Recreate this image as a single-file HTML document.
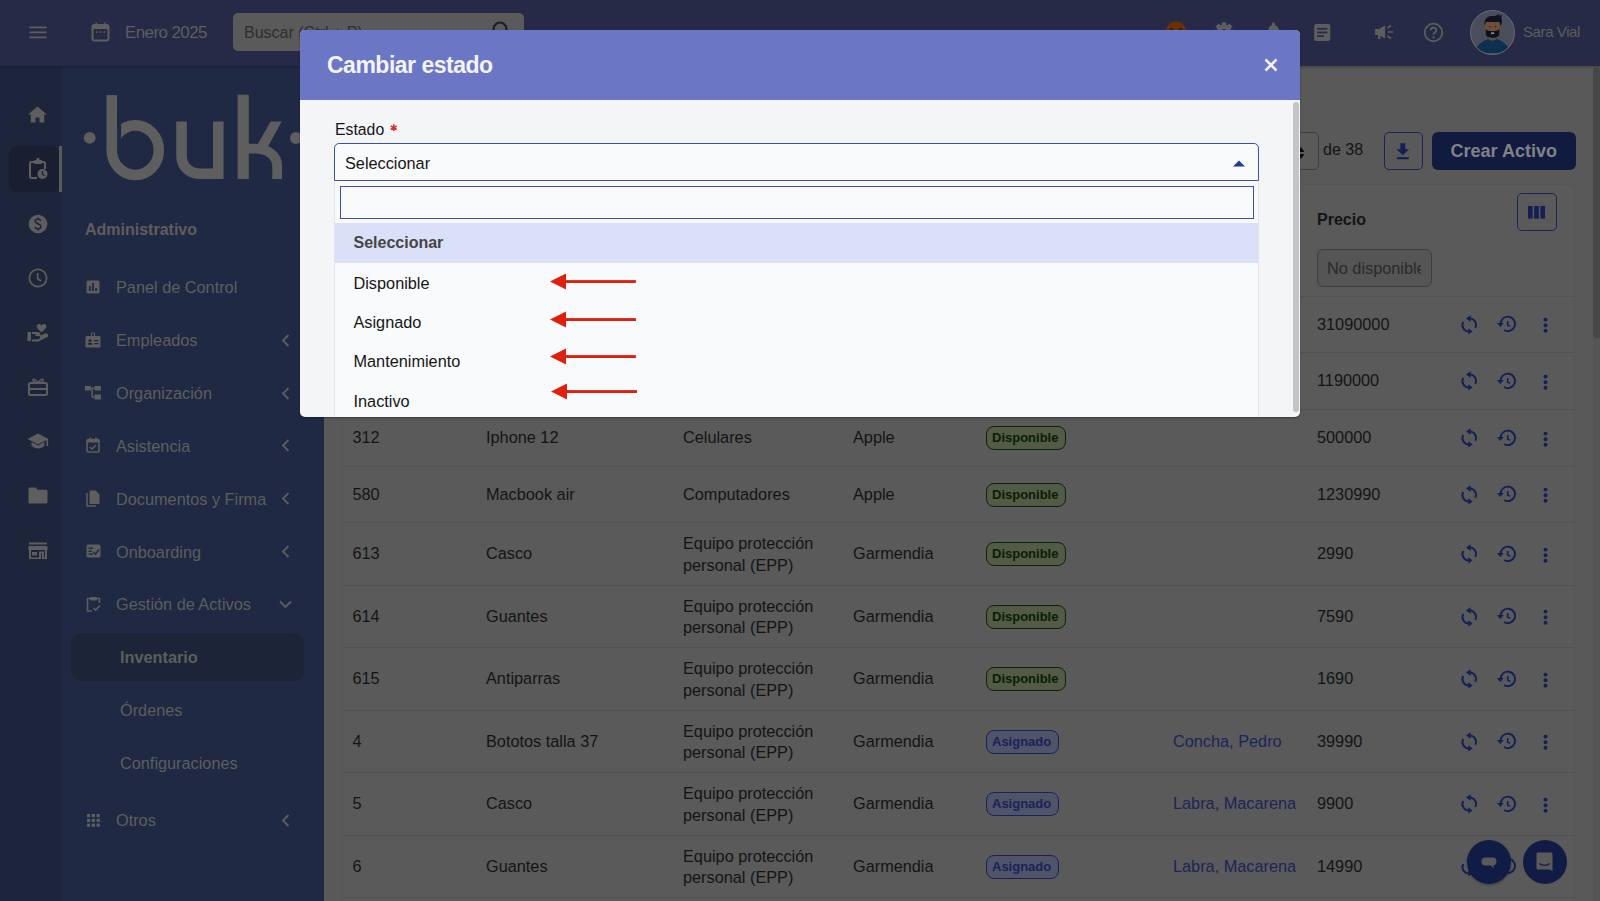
<!DOCTYPE html>
<html><head><meta charset="utf-8">
<style>
*{box-sizing:border-box;margin:0;padding:0}
html,body{width:1600px;height:901px;overflow:hidden;font-family:"Liberation Sans",sans-serif;background:#595959}
.abs{position:absolute}
#top{position:absolute;left:0;top:0;width:1600px;height:66px;background:#262a47;z-index:2;box-shadow:0 1px 3px rgba(0,0,0,.25)}
#rail{position:absolute;left:0;top:66px;width:62px;height:835px;background:#1c2539}
#side{position:absolute;left:62px;top:66px;width:262px;height:835px;background:#1f2943}
#main{position:absolute;left:324px;top:66px;width:1276px;height:835px;background:#595959}
.gi{fill:#5e5e5e}
.st{position:absolute;left:116px;font-size:16.3px;line-height:20px;color:#5e5e5e;white-space:nowrap}
.sico{position:absolute;left:86px}
.chev{position:absolute;left:281px}
.row{position:absolute;left:342px;width:1233px;border-bottom:1px solid #525252}
.c{position:absolute;top:50%;transform:translateY(-50%);font-size:16.3px;line-height:21.5px;color:#141414;white-space:nowrap}
.badge{position:absolute;top:50%;transform:translateY(-50%);left:644px;height:24px;border-radius:8px;font-size:13px;font-weight:bold;line-height:22px;padding:0 5px 0 5px}
.bd{background:#515b45;border:1px solid #0d2209;color:#0a1e06;width:80px}
.ba{background:#4f5468;border:1px solid #18235a;color:#18235a;width:73px}
.act{position:absolute;top:50%;transform:translateY(-50%)}
#modal{position:absolute;z-index:5;left:300px;top:30px;width:1000px;height:387px;border-radius:5px;overflow:hidden;background:#f4f5f7;box-shadow:0 1px 2px rgba(0,0,0,.35)}
#mh{position:absolute;left:0;top:0;width:1000px;height:70px;background:#6b77c5}
</style></head><body>

<!-- TOP BAR -->
<div id="top">
  <svg class="abs" style="left:29px;top:26px" width="18" height="13" viewBox="0 0 18 13"><rect x="0.5" y="0.5" width="17" height="1.8" fill="#5e5e5e"/><rect x="0.5" y="5.5" width="17" height="1.8" fill="#5e5e5e"/><rect x="0.5" y="10.5" width="17" height="1.8" fill="#5e5e5e"/></svg>
  <svg class="abs" style="left:91px;top:22px" width="19" height="20" viewBox="0 0 19 20"><rect x="1.5" y="3" width="16" height="15.5" rx="2" fill="none" stroke="#5e5e5e" stroke-width="2"/><rect x="1.5" y="3" width="16" height="4" fill="#5e5e5e"/><rect x="4.5" y="0.5" width="1.6" height="4" fill="#5e5e5e"/><rect x="12.9" y="0.5" width="1.6" height="4" fill="#5e5e5e"/><rect x="5" y="9.3" width="1.6" height="1.6" fill="#5e5e5e"/><rect x="8.7" y="9.3" width="1.6" height="1.6" fill="#5e5e5e"/><rect x="12.4" y="9.3" width="1.6" height="1.6" fill="#5e5e5e"/></svg>
  <div class="abs" style="left:125px;top:21.7px;font-size:17px;line-height:22px;color:#5e5e5e;letter-spacing:-0.6px">Enero 2025</div>
  <div class="abs" style="left:233px;top:13px;width:291px;height:38px;border-radius:5px;background:#5a5a5a"></div>
  <div class="abs" style="left:244px;top:23px;font-size:16px;line-height:20px;color:#2e2e2e">Buscar (Ctrl + P)</div>
  <svg class="abs" style="left:491px;top:20px" width="20" height="20" viewBox="0 0 20 20"><circle cx="9" cy="9" r="6.5" fill="none" stroke="#1e1e1e" stroke-width="2.2"/></svg>
  <svg class="abs" style="left:1164.5px;top:20.5px" width="22" height="22" viewBox="0 0 22 22"><circle cx="11" cy="11" r="10.5" fill="#6b3100"/><ellipse cx="6.5" cy="8.8" rx="1.9" ry="2.1" fill="#2a2230"/><ellipse cx="15.5" cy="8.8" rx="1.9" ry="2.1" fill="#2a2230"/><ellipse cx="6.5" cy="13.5" rx="1.9" ry="2.1" fill="#2a2230"/><ellipse cx="15.5" cy="13.5" rx="1.9" ry="2.1" fill="#2a2230"/></svg>
  <svg class="abs" style="left:1214px;top:22px" width="20" height="20" viewBox="0 0 20 20"><circle cx="10" cy="10" r="7.5" fill="#5e5e5e"/><g fill="#5e5e5e"><rect x="7.8" y="0.3" width="4.4" height="19.4"/><rect x="7.8" y="0.3" width="4.4" height="19.4" transform="rotate(45 10 10)"/><rect x="7.8" y="0.3" width="4.4" height="19.4" transform="rotate(90 10 10)"/><rect x="7.8" y="0.3" width="4.4" height="19.4" transform="rotate(135 10 10)"/></g><circle cx="10" cy="10" r="3" fill="#262a47"/></svg>
  <svg class="abs" style="left:1264px;top:22px" width="19" height="20" viewBox="0 0 19 20"><rect x="8" y="0.5" width="3" height="3" rx="1.2" fill="#5e5e5e"/><path d="M9.5 3 C5.5 3 4 6 4 10 L2 14.5 H17 L15 10 C15 6 13.5 3 9.5 3Z" fill="#5e5e5e"/></svg>
  <svg class="abs" style="left:1314px;top:24px" width="17" height="17.5" viewBox="0 0 17 18"><rect x="0" y="0" width="16.5" height="17.5" rx="2" fill="#5e5e5e"/><rect x="3" y="4" width="10.5" height="1.8" fill="#262a47"/><rect x="3" y="7.8" width="10.5" height="1.8" fill="#262a47"/><rect x="3" y="11.6" width="7" height="1.8" fill="#262a47"/></svg>
  <svg class="abs" style="left:1374px;top:24px" width="21" height="16" viewBox="0 0 21 16"><path d="M1 5 H5 L11 1.5 V14.5 L5 11 H1Z" fill="#5e5e5e"/><rect x="4" y="10" width="2.5" height="5" fill="#5e5e5e"/><path d="M14 8 H19 M13.5 4 L17 1.5 M13.5 12 L17 14.5" stroke="#5e5e5e" stroke-width="1.6" fill="none"/></svg>
  <svg class="abs" style="left:1423px;top:22px" width="21" height="21" viewBox="0 0 21 21"><circle cx="10.5" cy="10.5" r="8.8" fill="none" stroke="#5e5e5e" stroke-width="1.8"/><path d="M7.7 8.2 C7.7 4.8 13.3 4.8 13.3 8.2 C13.3 10.3 10.5 10.6 10.5 12.6" fill="none" stroke="#5e5e5e" stroke-width="1.8"/><circle cx="10.5" cy="15.3" r="1.1" fill="#5e5e5e"/></svg>
  <div id="avatar" class="abs" style="left:1469.5px;top:9.8px;width:45px;height:45px;border-radius:50%;background:#4a4e5c;border:1.5px solid #6b6b6b;overflow:hidden">
    <svg width="42" height="42" viewBox="1.5 1.5 42 42" style="display:block"><path d="M6.5 40 C8 35 13 31.5 19 29.5 L23 31.5 L27 29.5 C33 31.5 38 35 39.5 40 L39.5 46 H6.5Z" fill="#0d3050"/><rect x="19.8" y="25" width="6.2" height="5.5" fill="#6a4a30"/><ellipse cx="14.8" cy="19.2" rx="1.4" ry="2" fill="#6a4a30"/><ellipse cx="31" cy="19.2" rx="1.4" ry="2" fill="#6a4a30"/><path d="M16 12 H30.3 V22 C30.3 25 27 28 23 28 C19 28 16 25 16 22Z" fill="#6e4e34"/><path d="M16.3 19.5 C17 21 19 21.5 23 21.5 C27 21.5 29 21 29.8 19.5 V24.5 C29.8 27 26.5 28.4 23 28.4 C19.5 28.4 16.3 27 16.3 24.5Z" fill="#0e1220"/><rect x="21.6" y="23" width="3" height="1.3" fill="#b8b8b8"/><path d="M15 16 C14.3 9 18 6.5 23 6.5 C26 6.5 28 6 29.5 4.2 L29.8 6.8 L32.3 4.8 L31.8 8.5 C33 11 32.6 14 31 16.5 L30 12.5 H16.5Z" fill="#0e1220"/><circle cx="20.4" cy="17" r="0.7" fill="#222"/><circle cx="26" cy="17" r="0.7" fill="#222"/></svg>
  </div>
  <div class="abs" style="left:1523px;top:22px;font-size:15px;line-height:20px;color:#5e5e5e;letter-spacing:-0.4px">Sara Vial</div>
</div>

<!-- RAIL -->
<div id="rail">
  <div class="abs" style="left:9px;top:80px;width:50px;height:46px;border-radius:8px;background:#191f31"></div>
  <div class="abs" style="left:59px;top:80px;width:3px;height:46px;background:#5a5a5a"></div>
  <svg class="abs" style="left:28px;top:40px" width="19" height="17" viewBox="0 0 19 17"><path d="M9.5 0.5 L19 8.5 H16.2 V16.5 H11.5 V11.5 H7.5 V16.5 H2.8 V8.5 H0Z" fill="#5e5e5e"/></svg>
  <svg class="abs" style="left:29px;top:92px" width="19" height="21" viewBox="0 0 19 21"><path d="M8 4 H2.5 C1.6 4 1 4.6 1 5.5 V18.5 C1 19.4 1.6 20 2.5 20 H8" fill="none" stroke="#5e5e5e" stroke-width="2"/><path d="M16 11 V5.5 C16 4.6 15.4 4 14.5 4 H12" fill="none" stroke="#5e5e5e" stroke-width="2"/><rect x="5" y="2" width="8" height="4" rx="1" fill="#5e5e5e"/><rect x="7.5" y="0" width="3" height="3" rx="1" fill="#5e5e5e"/><circle cx="13.5" cy="16" r="5" fill="#5e5e5e"/><path d="M13.5 13 V16.3 L15.6 17.6" stroke="#1c2539" stroke-width="1.4" fill="none"/></svg>
  <svg class="abs" style="left:28px;top:148px" width="20" height="20" viewBox="0 0 20 20"><circle cx="10" cy="10" r="9.3" fill="#5e5e5e"/><path d="M12.8 6.8 C12.3 5.7 11.3 5.2 10 5.2 C8.3 5.2 7.2 6 7.2 7.3 C7.2 10.2 12.9 9.3 12.9 12.5 C12.9 13.9 11.7 14.8 10 14.8 C8.5 14.8 7.4 14.2 7 13 M10 3.5 V5.2 M10 14.8 V16.5" fill="none" stroke="#1c2539" stroke-width="1.6"/></svg>
  <svg class="abs" style="left:28px;top:202px" width="20" height="20" viewBox="0 0 20 20"><circle cx="10" cy="10" r="8.6" fill="none" stroke="#5e5e5e" stroke-width="1.7"/><path d="M9.6 5 V10.5 L13 13" fill="none" stroke="#5e5e5e" stroke-width="1.7"/></svg>
  <svg class="abs" style="left:27px;top:257px" width="21" height="19" viewBox="0 0 21 19"><rect x="0.5" y="9" width="3.5" height="9" fill="#5e5e5e"/><path d="M5 10 H10 C11.5 10 12.5 11 12.5 12 H8.5 M5 17.5 H11 L20 13 C20.5 12 19.6 11 18.5 11.5 L13 14" fill="none" stroke="#5e5e5e" stroke-width="2.2"/><path d="M14.5 9.5 L10.5 5.5 C9 4 9.5 1 12 1 C13.2 1 14 1.7 14.5 2.5 C15 1.7 15.8 1 17 1 C19.5 1 20 4 18.5 5.5Z" fill="#5e5e5e"/></svg>
  <svg class="abs" style="left:28px;top:311px" width="20" height="19" viewBox="0 0 20 19"><rect x="1" y="6" width="18" height="12" rx="1.5" fill="none" stroke="#5e5e5e" stroke-width="2"/><rect x="1" y="11" width="18" height="2" fill="#5e5e5e"/><path d="M10 6 C8 3 5.5 1 5 3 C4.6 4.5 7 6 10 6 C13 6 15.4 4.5 15 3 C14.5 1 12 3 10 6Z" fill="none" stroke="#5e5e5e" stroke-width="1.6"/></svg>
  <svg class="abs" style="left:27px;top:367px" width="22" height="17" viewBox="0 0 22 17"><path d="M11 0.5 L21.5 6 L11 11.5 L0.5 6Z" fill="#5e5e5e"/><path d="M4.5 9 V12.5 C6 14.5 8.5 15.5 11 15.5 C13.5 15.5 16 14.5 17.5 12.5 V9 L11 12.5Z" fill="#5e5e5e"/><rect x="19.5" y="6" width="1.6" height="7" fill="#5e5e5e"/></svg>
  <svg class="abs" style="left:28px;top:421px" width="20" height="17" viewBox="0 0 20 17"><path d="M0.5 2 C0.5 1 1 0.5 2 0.5 H7.5 L9.5 2.8 H18 C19 2.8 19.5 3.3 19.5 4.3 V15 C19.5 16 19 16.5 18 16.5 H2 C1 16.5 0.5 16 0.5 15Z" fill="#5e5e5e"/></svg>
  <svg class="abs" style="left:28px;top:476px" width="20" height="17" viewBox="0 0 20 17"><rect x="1" y="0.5" width="18" height="2" fill="#5e5e5e"/><path d="M0.5 4 H19.5 V8 H0.5Z" fill="#5e5e5e"/><path d="M2 8 V16.5 H12 V10.5 H15 V16.5 H18 V8" fill="none" stroke="#5e5e5e" stroke-width="2"/><rect x="4" y="10" width="5" height="3.5" fill="#5e5e5e"/></svg>
</div>

<!-- SIDEBAR -->
<div id="side">
<svg class="abs" style="left:0px;top:0px" width="262" height="130" viewBox="0 0 262 130">
 <g fill="#5e5e5e">
  <circle cx="27.7" cy="71.8" r="5.9"/>
  <circle cx="233.9" cy="72" r="5.9"/>
  <rect x="175.6" y="28.7" width="11.2" height="84.3"/>
  <path d="M195.9 78 L208.6 55.6 H219.7 L206 80.4Z"/>
 </g>
 <g fill="none" stroke="#5e5e5e" stroke-width="10.6">
  <path d="M49.75 29.1 V84.2"/>
  <ellipse cx="73.3" cy="84.2" rx="23.5" ry="24.8"/>
  <path d="M119.55 55.6 V89.7 C119.55 100 127 107.7 137.55 107.7 H156.3 M156.3 55.6 V112.9" stroke-width="10.6"/>
  <path d="M181 82.65 H193 C205 82.65 215.2 89 215.2 100 V113" stroke-width="9.8"/>
 </g>
 <path d="M55.1 50 H59.1 V68.8 Q59.1 76 55.1 84Z" fill="#1f2943"/>
</svg>
<div class="abs" style="left:23px;top:153.6px;font-size:16px;line-height:20px;font-weight:bold;color:#5e5e5e">Administrativo</div>
<div class="st" style="left:54px;top:211.05px">Panel de Control</div>
<div class="abs" style="left:24.0px;top:213.75px;width:14px;height:14px;line-height:0"><svg width="14" height="14" viewBox="0 0 14 14"><rect x="0.5" y="0.5" width="13" height="13" rx="1.5" fill="#5e5e5e"/><rect x="3" y="6" width="1.8" height="5" fill="#1f2943"/><rect x="6.1" y="3" width="1.8" height="8" fill="#1f2943"/><rect x="9.2" y="8" width="1.8" height="3" fill="#1f2943"/></svg></div>
<div class="st" style="left:54px;top:263.95px">Empleados</div>
<div class="abs" style="left:23.0px;top:265.65px;width:16px;height:16px;line-height:0"><svg width="16" height="16" viewBox="0 0 16 16"><rect x="0.5" y="4" width="15" height="11.5" rx="1.5" fill="#5e5e5e"/><rect x="6" y="0.5" width="4" height="5" fill="#5e5e5e"/><rect x="7" y="1.5" width="2" height="2.5" fill="#1f2943"/><circle cx="5" cy="8.5" r="1.5" fill="#1f2943"/><rect x="2.8" y="10.8" width="4.4" height="2" fill="#1f2943"/><rect x="9" y="8" width="4.5" height="1.3" fill="#1f2943"/><rect x="9" y="11" width="4.5" height="1.3" fill="#1f2943"/></svg></div>
<svg class="abs" style="left:219px;top:268px" width="9" height="13" viewBox="0 0 9 13"><path d="M7.5 1 L2 6.5 L7.5 12" fill="none" stroke="#5e5e5e" stroke-width="1.8"/></svg>
<div class="st" style="left:54px;top:316.85px">Organización</div>
<div class="abs" style="left:23.0px;top:319.55px;width:16px;height:14px;line-height:0"><svg width="16" height="14" viewBox="0 0 16 14"><rect x="0" y="0" width="6" height="4.5" fill="#5e5e5e"/><rect x="9.5" y="0" width="6.5" height="4.5" fill="#5e5e5e"/><rect x="9.5" y="8.5" width="6.5" height="5" fill="#5e5e5e"/><path d="M5 2.2 H9.5 M7.2 2.2 V11 H9.5" stroke="#5e5e5e" stroke-width="1.5" fill="none"/></svg></div>
<svg class="abs" style="left:219px;top:321px" width="9" height="13" viewBox="0 0 9 13"><path d="M7.5 1 L2 6.5 L7.5 12" fill="none" stroke="#5e5e5e" stroke-width="1.8"/></svg>
<div class="st" style="left:54px;top:369.75px">Asistencia</div>
<div class="abs" style="left:24.0px;top:371.45px;width:14px;height:16px;line-height:0"><svg width="14" height="16" viewBox="0 0 14 16"><rect x="1" y="2.5" width="12" height="12.5" rx="1.2" fill="none" stroke="#5e5e5e" stroke-width="1.6"/><rect x="1" y="2.5" width="12" height="3" fill="#5e5e5e"/><rect x="3.2" y="0.5" width="1.5" height="3" fill="#5e5e5e"/><rect x="9.3" y="0.5" width="1.5" height="3" fill="#5e5e5e"/><path d="M4 10 L6 12 L10 8" stroke="#5e5e5e" stroke-width="1.4" fill="none"/></svg></div>
<svg class="abs" style="left:219px;top:373px" width="9" height="13" viewBox="0 0 9 13"><path d="M7.5 1 L2 6.5 L7.5 12" fill="none" stroke="#5e5e5e" stroke-width="1.8"/></svg>
<div class="st" style="left:54px;top:422.65px">Documentos y Firma</div>
<div class="abs" style="left:24.0px;top:423.85px;width:14px;height:17px;line-height:0"><svg width="14" height="17" viewBox="0 0 14 17"><path d="M1 3 V16 H10" fill="none" stroke="#5e5e5e" stroke-width="1.5"/><path d="M3.5 0.5 H9.5 L13.5 4.5 V14 H3.5Z" fill="#5e5e5e"/></svg></div>
<svg class="abs" style="left:219px;top:426px" width="9" height="13" viewBox="0 0 9 13"><path d="M7.5 1 L2 6.5 L7.5 12" fill="none" stroke="#5e5e5e" stroke-width="1.8"/></svg>
<div class="st" style="left:54px;top:475.55px">Onboarding</div>
<div class="abs" style="left:23.5px;top:478.25px;width:15px;height:14px;line-height:0"><svg width="15" height="14" viewBox="0 0 15 14"><rect x="0.5" y="0.5" width="14" height="13" rx="1.5" fill="#5e5e5e"/><rect x="2.5" y="3.5" width="4.5" height="1.4" fill="#1f2943"/><rect x="2.5" y="6.5" width="3.5" height="1.4" fill="#1f2943"/><rect x="2.5" y="9.5" width="4.5" height="1.4" fill="#1f2943"/><path d="M7.5 8 L9.5 10 L13 5.5" stroke="#1f2943" stroke-width="1.5" fill="none"/></svg></div>
<svg class="abs" style="left:219px;top:479px" width="9" height="13" viewBox="0 0 9 13"><path d="M7.5 1 L2 6.5 L7.5 12" fill="none" stroke="#5e5e5e" stroke-width="1.8"/></svg>
<div class="st" style="left:54px;top:528.45px">Gestión de Activos</div>
<div class="abs" style="left:23.5px;top:530.15px;width:15px;height:16px;line-height:0"><svg width="15" height="16" viewBox="0 0 15 16"><path d="M4.5 2.5 H1.5 V15 H6" fill="none" stroke="#5e5e5e" stroke-width="1.6"/><path d="M10.5 2.5 H13.5 V7" fill="none" stroke="#5e5e5e" stroke-width="1.6"/><rect x="4" y="1" width="7" height="3.5" rx="0.8" fill="#5e5e5e"/><path d="M7.5 12 L9.5 14 L14 9.5" stroke="#5e5e5e" stroke-width="1.6" fill="none"/></svg></div>
<svg class="abs" style="left:217px;top:534px" width="13" height="9" viewBox="0 0 13 9"><path d="M1 1.5 L6.5 7 L12 1.5" fill="none" stroke="#5e5e5e" stroke-width="1.8"/></svg>
<div class="abs" style="left:9px;top:567px;width:233px;height:48px;border-radius:10px;background:#1c2437"></div>
<div class="st" style="left:58px;top:581.10px;font-weight:bold">Inventario</div>
<div class="st" style="left:58px;top:633.50px">Órdenes</div>
<div class="st" style="left:58px;top:686.50px">Configuraciones</div>
<div class="st" style="left:54px;top:743.60px">Otros</div>
<svg class="abs" style="left:25px;top:748px" width="13" height="13" viewBox="0 0 13 13"><rect x="0" y="0" width="3.2" height="3.2" fill="#5e5e5e"/><rect x="0" y="4.8" width="3.2" height="3.2" fill="#5e5e5e"/><rect x="0" y="9.6" width="3.2" height="3.2" fill="#5e5e5e"/><rect x="4.8" y="0" width="3.2" height="3.2" fill="#5e5e5e"/><rect x="4.8" y="4.8" width="3.2" height="3.2" fill="#5e5e5e"/><rect x="4.8" y="9.6" width="3.2" height="3.2" fill="#5e5e5e"/><rect x="9.6" y="0" width="3.2" height="3.2" fill="#5e5e5e"/><rect x="9.6" y="4.8" width="3.2" height="3.2" fill="#5e5e5e"/><rect x="9.6" y="9.6" width="3.2" height="3.2" fill="#5e5e5e"/></svg>
<svg class="abs" style="left:219px;top:748px" width="9" height="13" viewBox="0 0 9 13"><path d="M7.5 1 L2 6.5 L7.5 12" fill="none" stroke="#5e5e5e" stroke-width="1.8"/></svg>
</div>

<!-- MAIN -->
<div id="main">
<div class="abs" style="left:18px;top:118px;width:1233px;height:737px;border:1px solid #555555;border-radius:8px;background:#5a5a5a"></div>
<div class="abs" style="left:926px;top:66px;width:68.5px;height:38px;border:1px solid #3e3e3e;border-radius:5px;background:#5a5a5a"></div>
<svg class="abs" style="left:973px;top:80px" width="8" height="14" viewBox="0 0 8 14"><path d="M0.5 6 L4 1 L7.5 6Z M0.5 8 L4 13 L7.5 8Z" fill="#0a0a0a"/></svg>
<div class="abs" style="left:999px;top:74px;font-size:16px;line-height:20px;color:#141414">de 38</div>
<div class="abs" style="left:1059.5px;top:66px;width:39px;height:38px;border:1.5px solid #1b2459;border-radius:5px"></div>
<svg class="abs" style="left:1072px;top:76.5px" width="14" height="17" viewBox="0 0 14 17"><path d="M4.4 0.3 H9.2 V6.3 H13 L6.8 12.2 L0.6 6.3 H4.4Z" fill="#131f55"/><rect x="0.8" y="14.2" width="12" height="2" fill="#131f55"/></svg>
<div class="abs" style="left:1108px;top:66px;width:143.5px;height:38px;border-radius:6px;background:#111b3f"></div>
<div class="abs" style="left:1108px;top:74px;width:143.5px;text-align:center;font-size:18px;line-height:22px;font-weight:bold;color:#828286">Crear Activo</div>
<div class="abs" style="left:1193px;top:127.30000000000001px;width:39.5px;height:37.5px;border:1.5px solid #1b2459;border-radius:5px"></div>
<svg class="abs" style="left:1204px;top:140px" width="17" height="13" viewBox="0 0 17 13"><rect x="0" y="0" width="4.6" height="12.6" fill="#131f55"/><rect x="6.2" y="0" width="4.6" height="12.6" fill="#131f55"/><rect x="12.4" y="0" width="4.6" height="12.6" fill="#131f55"/></svg>
<div class="abs" style="left:993px;top:143.8px;font-size:16px;line-height:20px;font-weight:bold;color:#141414">Precio</div>
<div class="abs" style="left:993px;top:183.2px;width:115px;height:38px;border:1px solid #3e3e3e;border-radius:6px;background:#555555;overflow:hidden"><div style="position:absolute;left:9px;top:8px;font-size:16.3px;line-height:20px;color:#2a2a2a;white-space:nowrap;width:94px;overflow:hidden">No disponible</div></div>
<div class="abs" style="left:19px;top:230px;width:1231px;height:1px;background:#535353"></div>
<div class="row" style="left:19px;top:231px;height:56px;width:1231px"><div class="c" style="left:974px;">31090000</div><div class="act" style="left:1117px;height:21px;line-height:0"><svg width="20" height="21" viewBox="0 0 20 21"><path d="M9.6 3.9 A6.5 6.5 0 0 1 15.3 13.3" fill="none" stroke="#131f55" stroke-width="1.9"/><path d="M6 4 L10.6 0.7 V7.3Z" fill="#131f55"/><path d="M3.3 7.4 A6.3 6.3 0 0 0 8.8 16.9" fill="none" stroke="#131f55" stroke-width="1.9"/><path d="M12.6 16.9 L8.3 13.7 V20.1Z" fill="#131f55"/></svg></div><div class="act" style="left:1152px;top:calc(50% - 1.2px);height:19px;line-height:0"><svg width="21" height="19" viewBox="0 0 21 19"><path d="M5.6 10.4 A7.2 7.2 0 1 1 9.2 16.6" fill="none" stroke="#131f55" stroke-width="1.9"/><path d="M1.9 9.4 H8.75 L5.3 13.5Z" fill="#131f55"/><path d="M12.7 7.4 V11.6 L15.3 12.9" fill="none" stroke="#131f55" stroke-width="1.6"/></svg></div><div class="act" style="left:1200px;top:calc(50% + 0.5px);height:16px;line-height:0"><svg width="6" height="16" viewBox="0 0 6 16"><circle cx="2.5" cy="2.6" r="1.95" fill="#131f55"/><circle cx="2.5" cy="8.2" r="1.95" fill="#131f55"/><circle cx="2.5" cy="13.7" r="1.95" fill="#131f55"/></svg></div></div>
<div class="row" style="left:19px;top:287px;height:57px;width:1231px"><div class="c" style="left:974px;">1190000</div><div class="act" style="left:1117px;height:21px;line-height:0"><svg width="20" height="21" viewBox="0 0 20 21"><path d="M9.6 3.9 A6.5 6.5 0 0 1 15.3 13.3" fill="none" stroke="#131f55" stroke-width="1.9"/><path d="M6 4 L10.6 0.7 V7.3Z" fill="#131f55"/><path d="M3.3 7.4 A6.3 6.3 0 0 0 8.8 16.9" fill="none" stroke="#131f55" stroke-width="1.9"/><path d="M12.6 16.9 L8.3 13.7 V20.1Z" fill="#131f55"/></svg></div><div class="act" style="left:1152px;top:calc(50% - 1.2px);height:19px;line-height:0"><svg width="21" height="19" viewBox="0 0 21 19"><path d="M5.6 10.4 A7.2 7.2 0 1 1 9.2 16.6" fill="none" stroke="#131f55" stroke-width="1.9"/><path d="M1.9 9.4 H8.75 L5.3 13.5Z" fill="#131f55"/><path d="M12.7 7.4 V11.6 L15.3 12.9" fill="none" stroke="#131f55" stroke-width="1.6"/></svg></div><div class="act" style="left:1200px;top:calc(50% + 0.5px);height:16px;line-height:0"><svg width="6" height="16" viewBox="0 0 6 16"><circle cx="2.5" cy="2.6" r="1.95" fill="#131f55"/><circle cx="2.5" cy="8.2" r="1.95" fill="#131f55"/><circle cx="2.5" cy="13.7" r="1.95" fill="#131f55"/></svg></div></div>
<div class="row" style="left:19px;top:344px;height:57px;width:1231px"><div class="c" style="left:9.5px;">312</div><div class="c" style="left:143px;">Iphone 12</div><div class="c" style="left:340px;">Celulares</div><div class="c" style="left:510px;">Apple</div><div class="badge bd" style="left:643px">Disponible</div><div class="c" style="left:974px;">500000</div><div class="act" style="left:1117px;height:21px;line-height:0"><svg width="20" height="21" viewBox="0 0 20 21"><path d="M9.6 3.9 A6.5 6.5 0 0 1 15.3 13.3" fill="none" stroke="#131f55" stroke-width="1.9"/><path d="M6 4 L10.6 0.7 V7.3Z" fill="#131f55"/><path d="M3.3 7.4 A6.3 6.3 0 0 0 8.8 16.9" fill="none" stroke="#131f55" stroke-width="1.9"/><path d="M12.6 16.9 L8.3 13.7 V20.1Z" fill="#131f55"/></svg></div><div class="act" style="left:1152px;top:calc(50% - 1.2px);height:19px;line-height:0"><svg width="21" height="19" viewBox="0 0 21 19"><path d="M5.6 10.4 A7.2 7.2 0 1 1 9.2 16.6" fill="none" stroke="#131f55" stroke-width="1.9"/><path d="M1.9 9.4 H8.75 L5.3 13.5Z" fill="#131f55"/><path d="M12.7 7.4 V11.6 L15.3 12.9" fill="none" stroke="#131f55" stroke-width="1.6"/></svg></div><div class="act" style="left:1200px;top:calc(50% + 0.5px);height:16px;line-height:0"><svg width="6" height="16" viewBox="0 0 6 16"><circle cx="2.5" cy="2.6" r="1.95" fill="#131f55"/><circle cx="2.5" cy="8.2" r="1.95" fill="#131f55"/><circle cx="2.5" cy="13.7" r="1.95" fill="#131f55"/></svg></div></div>
<div class="row" style="left:19px;top:401px;height:56px;width:1231px"><div class="c" style="left:9.5px;">580</div><div class="c" style="left:143px;">Macbook air</div><div class="c" style="left:340px;">Computadores</div><div class="c" style="left:510px;">Apple</div><div class="badge bd" style="left:643px">Disponible</div><div class="c" style="left:974px;">1230990</div><div class="act" style="left:1117px;height:21px;line-height:0"><svg width="20" height="21" viewBox="0 0 20 21"><path d="M9.6 3.9 A6.5 6.5 0 0 1 15.3 13.3" fill="none" stroke="#131f55" stroke-width="1.9"/><path d="M6 4 L10.6 0.7 V7.3Z" fill="#131f55"/><path d="M3.3 7.4 A6.3 6.3 0 0 0 8.8 16.9" fill="none" stroke="#131f55" stroke-width="1.9"/><path d="M12.6 16.9 L8.3 13.7 V20.1Z" fill="#131f55"/></svg></div><div class="act" style="left:1152px;top:calc(50% - 1.2px);height:19px;line-height:0"><svg width="21" height="19" viewBox="0 0 21 19"><path d="M5.6 10.4 A7.2 7.2 0 1 1 9.2 16.6" fill="none" stroke="#131f55" stroke-width="1.9"/><path d="M1.9 9.4 H8.75 L5.3 13.5Z" fill="#131f55"/><path d="M12.7 7.4 V11.6 L15.3 12.9" fill="none" stroke="#131f55" stroke-width="1.6"/></svg></div><div class="act" style="left:1200px;top:calc(50% + 0.5px);height:16px;line-height:0"><svg width="6" height="16" viewBox="0 0 6 16"><circle cx="2.5" cy="2.6" r="1.95" fill="#131f55"/><circle cx="2.5" cy="8.2" r="1.95" fill="#131f55"/><circle cx="2.5" cy="13.7" r="1.95" fill="#131f55"/></svg></div></div>
<div class="row" style="left:19px;top:457px;height:63px;width:1231px"><div class="c" style="left:9.5px;">613</div><div class="c" style="left:143px;">Casco</div><div class="c" style="left:340px;">Equipo protección<br>personal (EPP)</div><div class="c" style="left:510px;">Garmendia</div><div class="badge bd" style="left:643px">Disponible</div><div class="c" style="left:974px;">2990</div><div class="act" style="left:1117px;height:21px;line-height:0"><svg width="20" height="21" viewBox="0 0 20 21"><path d="M9.6 3.9 A6.5 6.5 0 0 1 15.3 13.3" fill="none" stroke="#131f55" stroke-width="1.9"/><path d="M6 4 L10.6 0.7 V7.3Z" fill="#131f55"/><path d="M3.3 7.4 A6.3 6.3 0 0 0 8.8 16.9" fill="none" stroke="#131f55" stroke-width="1.9"/><path d="M12.6 16.9 L8.3 13.7 V20.1Z" fill="#131f55"/></svg></div><div class="act" style="left:1152px;top:calc(50% - 1.2px);height:19px;line-height:0"><svg width="21" height="19" viewBox="0 0 21 19"><path d="M5.6 10.4 A7.2 7.2 0 1 1 9.2 16.6" fill="none" stroke="#131f55" stroke-width="1.9"/><path d="M1.9 9.4 H8.75 L5.3 13.5Z" fill="#131f55"/><path d="M12.7 7.4 V11.6 L15.3 12.9" fill="none" stroke="#131f55" stroke-width="1.6"/></svg></div><div class="act" style="left:1200px;top:calc(50% + 0.5px);height:16px;line-height:0"><svg width="6" height="16" viewBox="0 0 6 16"><circle cx="2.5" cy="2.6" r="1.95" fill="#131f55"/><circle cx="2.5" cy="8.2" r="1.95" fill="#131f55"/><circle cx="2.5" cy="13.7" r="1.95" fill="#131f55"/></svg></div></div>
<div class="row" style="left:19px;top:520px;height:62px;width:1231px"><div class="c" style="left:9.5px;">614</div><div class="c" style="left:143px;">Guantes</div><div class="c" style="left:340px;">Equipo protección<br>personal (EPP)</div><div class="c" style="left:510px;">Garmendia</div><div class="badge bd" style="left:643px">Disponible</div><div class="c" style="left:974px;">7590</div><div class="act" style="left:1117px;height:21px;line-height:0"><svg width="20" height="21" viewBox="0 0 20 21"><path d="M9.6 3.9 A6.5 6.5 0 0 1 15.3 13.3" fill="none" stroke="#131f55" stroke-width="1.9"/><path d="M6 4 L10.6 0.7 V7.3Z" fill="#131f55"/><path d="M3.3 7.4 A6.3 6.3 0 0 0 8.8 16.9" fill="none" stroke="#131f55" stroke-width="1.9"/><path d="M12.6 16.9 L8.3 13.7 V20.1Z" fill="#131f55"/></svg></div><div class="act" style="left:1152px;top:calc(50% - 1.2px);height:19px;line-height:0"><svg width="21" height="19" viewBox="0 0 21 19"><path d="M5.6 10.4 A7.2 7.2 0 1 1 9.2 16.6" fill="none" stroke="#131f55" stroke-width="1.9"/><path d="M1.9 9.4 H8.75 L5.3 13.5Z" fill="#131f55"/><path d="M12.7 7.4 V11.6 L15.3 12.9" fill="none" stroke="#131f55" stroke-width="1.6"/></svg></div><div class="act" style="left:1200px;top:calc(50% + 0.5px);height:16px;line-height:0"><svg width="6" height="16" viewBox="0 0 6 16"><circle cx="2.5" cy="2.6" r="1.95" fill="#131f55"/><circle cx="2.5" cy="8.2" r="1.95" fill="#131f55"/><circle cx="2.5" cy="13.7" r="1.95" fill="#131f55"/></svg></div></div>
<div class="row" style="left:19px;top:582px;height:63px;width:1231px"><div class="c" style="left:9.5px;">615</div><div class="c" style="left:143px;">Antiparras</div><div class="c" style="left:340px;">Equipo protección<br>personal (EPP)</div><div class="c" style="left:510px;">Garmendia</div><div class="badge bd" style="left:643px">Disponible</div><div class="c" style="left:974px;">1690</div><div class="act" style="left:1117px;height:21px;line-height:0"><svg width="20" height="21" viewBox="0 0 20 21"><path d="M9.6 3.9 A6.5 6.5 0 0 1 15.3 13.3" fill="none" stroke="#131f55" stroke-width="1.9"/><path d="M6 4 L10.6 0.7 V7.3Z" fill="#131f55"/><path d="M3.3 7.4 A6.3 6.3 0 0 0 8.8 16.9" fill="none" stroke="#131f55" stroke-width="1.9"/><path d="M12.6 16.9 L8.3 13.7 V20.1Z" fill="#131f55"/></svg></div><div class="act" style="left:1152px;top:calc(50% - 1.2px);height:19px;line-height:0"><svg width="21" height="19" viewBox="0 0 21 19"><path d="M5.6 10.4 A7.2 7.2 0 1 1 9.2 16.6" fill="none" stroke="#131f55" stroke-width="1.9"/><path d="M1.9 9.4 H8.75 L5.3 13.5Z" fill="#131f55"/><path d="M12.7 7.4 V11.6 L15.3 12.9" fill="none" stroke="#131f55" stroke-width="1.6"/></svg></div><div class="act" style="left:1200px;top:calc(50% + 0.5px);height:16px;line-height:0"><svg width="6" height="16" viewBox="0 0 6 16"><circle cx="2.5" cy="2.6" r="1.95" fill="#131f55"/><circle cx="2.5" cy="8.2" r="1.95" fill="#131f55"/><circle cx="2.5" cy="13.7" r="1.95" fill="#131f55"/></svg></div></div>
<div class="row" style="left:19px;top:645px;height:62px;width:1231px"><div class="c" style="left:9.5px;">4</div><div class="c" style="left:143px;">Bototos talla 37</div><div class="c" style="left:340px;">Equipo protección<br>personal (EPP)</div><div class="c" style="left:510px;">Garmendia</div><div class="badge ba" style="left:643px">Asignado</div><div class="c" style="left:830px;color:#1a2559">Concha, Pedro</div><div class="c" style="left:974px;">39990</div><div class="act" style="left:1117px;height:21px;line-height:0"><svg width="20" height="21" viewBox="0 0 20 21"><path d="M9.6 3.9 A6.5 6.5 0 0 1 15.3 13.3" fill="none" stroke="#131f55" stroke-width="1.9"/><path d="M6 4 L10.6 0.7 V7.3Z" fill="#131f55"/><path d="M3.3 7.4 A6.3 6.3 0 0 0 8.8 16.9" fill="none" stroke="#131f55" stroke-width="1.9"/><path d="M12.6 16.9 L8.3 13.7 V20.1Z" fill="#131f55"/></svg></div><div class="act" style="left:1152px;top:calc(50% - 1.2px);height:19px;line-height:0"><svg width="21" height="19" viewBox="0 0 21 19"><path d="M5.6 10.4 A7.2 7.2 0 1 1 9.2 16.6" fill="none" stroke="#131f55" stroke-width="1.9"/><path d="M1.9 9.4 H8.75 L5.3 13.5Z" fill="#131f55"/><path d="M12.7 7.4 V11.6 L15.3 12.9" fill="none" stroke="#131f55" stroke-width="1.6"/></svg></div><div class="act" style="left:1200px;top:calc(50% + 0.5px);height:16px;line-height:0"><svg width="6" height="16" viewBox="0 0 6 16"><circle cx="2.5" cy="2.6" r="1.95" fill="#131f55"/><circle cx="2.5" cy="8.2" r="1.95" fill="#131f55"/><circle cx="2.5" cy="13.7" r="1.95" fill="#131f55"/></svg></div></div>
<div class="row" style="left:19px;top:707px;height:63px;width:1231px"><div class="c" style="left:9.5px;">5</div><div class="c" style="left:143px;">Casco</div><div class="c" style="left:340px;">Equipo protección<br>personal (EPP)</div><div class="c" style="left:510px;">Garmendia</div><div class="badge ba" style="left:643px">Asignado</div><div class="c" style="left:830px;color:#1a2559">Labra, Macarena</div><div class="c" style="left:974px;">9900</div><div class="act" style="left:1117px;height:21px;line-height:0"><svg width="20" height="21" viewBox="0 0 20 21"><path d="M9.6 3.9 A6.5 6.5 0 0 1 15.3 13.3" fill="none" stroke="#131f55" stroke-width="1.9"/><path d="M6 4 L10.6 0.7 V7.3Z" fill="#131f55"/><path d="M3.3 7.4 A6.3 6.3 0 0 0 8.8 16.9" fill="none" stroke="#131f55" stroke-width="1.9"/><path d="M12.6 16.9 L8.3 13.7 V20.1Z" fill="#131f55"/></svg></div><div class="act" style="left:1152px;top:calc(50% - 1.2px);height:19px;line-height:0"><svg width="21" height="19" viewBox="0 0 21 19"><path d="M5.6 10.4 A7.2 7.2 0 1 1 9.2 16.6" fill="none" stroke="#131f55" stroke-width="1.9"/><path d="M1.9 9.4 H8.75 L5.3 13.5Z" fill="#131f55"/><path d="M12.7 7.4 V11.6 L15.3 12.9" fill="none" stroke="#131f55" stroke-width="1.6"/></svg></div><div class="act" style="left:1200px;top:calc(50% + 0.5px);height:16px;line-height:0"><svg width="6" height="16" viewBox="0 0 6 16"><circle cx="2.5" cy="2.6" r="1.95" fill="#131f55"/><circle cx="2.5" cy="8.2" r="1.95" fill="#131f55"/><circle cx="2.5" cy="13.7" r="1.95" fill="#131f55"/></svg></div></div>
<div class="row" style="left:19px;top:770px;height:62px;width:1231px"><div class="c" style="left:9.5px;">6</div><div class="c" style="left:143px;">Guantes</div><div class="c" style="left:340px;">Equipo protección<br>personal (EPP)</div><div class="c" style="left:510px;">Garmendia</div><div class="badge ba" style="left:643px">Asignado</div><div class="c" style="left:830px;color:#1a2559">Labra, Macarena</div><div class="c" style="left:974px;">14990</div><div class="act" style="left:1117px;height:21px;line-height:0"><svg width="20" height="21" viewBox="0 0 20 21"><path d="M9.6 3.9 A6.5 6.5 0 0 1 15.3 13.3" fill="none" stroke="#131f55" stroke-width="1.9"/><path d="M6 4 L10.6 0.7 V7.3Z" fill="#131f55"/><path d="M3.3 7.4 A6.3 6.3 0 0 0 8.8 16.9" fill="none" stroke="#131f55" stroke-width="1.9"/><path d="M12.6 16.9 L8.3 13.7 V20.1Z" fill="#131f55"/></svg></div><div class="act" style="left:1152px;top:calc(50% - 1.2px);height:19px;line-height:0"><svg width="21" height="19" viewBox="0 0 21 19"><path d="M5.6 10.4 A7.2 7.2 0 1 1 9.2 16.6" fill="none" stroke="#131f55" stroke-width="1.9"/><path d="M1.9 9.4 H8.75 L5.3 13.5Z" fill="#131f55"/><path d="M12.7 7.4 V11.6 L15.3 12.9" fill="none" stroke="#131f55" stroke-width="1.6"/></svg></div><div class="act" style="left:1200px;top:calc(50% + 0.5px);height:16px;line-height:0"><svg width="6" height="16" viewBox="0 0 6 16"><circle cx="2.5" cy="2.6" r="1.95" fill="#131f55"/><circle cx="2.5" cy="8.2" r="1.95" fill="#131f55"/><circle cx="2.5" cy="13.7" r="1.95" fill="#131f55"/></svg></div></div>
<div class="abs" style="left:1269px;top:0px;width:7px;height:835px;background:#535557"></div>
<div class="abs" style="left:1269px;top:2px;width:7px;height:270px;border-radius:3.5px;background:#454646"></div>
<div class="abs" style="left:1142.8px;top:774px;width:44px;height:44px;border-radius:50%;background:#101c45;box-shadow:0 1px 3px rgba(0,0,0,.3)"></div>
<svg class="abs" style="left:1157px;top:791px" width="16" height="13" viewBox="0 0 16 13"><rect x="0.5" y="0.5" width="15" height="8" rx="4" fill="#5a5a5a"/><path d="M9.5 8 L13 12 L12 8Z" fill="#5a5a5a"/></svg>
<div class="abs" style="left:1198.5px;top:774px;width:44px;height:44px;border-radius:50%;background:#101c45"></div>
<svg class="abs" style="left:1212px;top:786px" width="17" height="20" viewBox="0 0 17 20"><path d="M2 0.5 H15 C16 0.5 16.5 1 16.5 2 V19 L13 17.5 H2 C1 17.5 0.5 17 0.5 16 V2 C0.5 1 1 0.5 2 0.5Z" fill="#5a5a5a"/><path d="M3.5 11.5 C6 14 11 14 13.5 11.5" fill="none" stroke="#101c45" stroke-width="1.3"/></svg>
</div>

<!-- MODAL -->
<div id="modal">
  <div id="mh">
    <div class="abs" style="left:27px;top:20px;font-size:23px;line-height:30px;font-weight:bold;color:#f4f4f6;letter-spacing:-0.5px">Cambiar estado</div>
    <svg class="abs" style="left:964px;top:28px" width="14" height="14" viewBox="0 0 14 14"><path d="M1.5 1.5 L12.5 12.5 M12.5 1.5 L1.5 12.5" stroke="#f4f4f6" stroke-width="2.6"/></svg>
  </div>
<div class="abs" style="left:35px;top:89.5px;font-size:15.8px;line-height:20px;color:#161616">Estado</div><svg class="abs" style="left:89.5px;top:93.5px" width="7.5" height="7.5" viewBox="0 0 8 8"><path d="M4 0.3 V7.7 M0.8 2.15 L7.2 5.85 M0.8 5.85 L7.2 2.15" stroke="#d9302a" stroke-width="1.6"/></svg>
<div class="abs" style="left:34px;top:113px;width:925px;height:38px;border:1.5px solid #3d4fa8;border-radius:5px 5px 0 0;background:#f9fafc"></div>
<div class="abs" style="left:45px;top:123px;font-size:16.3px;line-height:20px;color:#161616">Seleccionar</div>
<svg class="abs" style="left:933px;top:129.5px" width="12" height="7" viewBox="0 0 12 7"><path d="M0 6.5 L6 0.5 L12 6.5Z" fill="#24398f"/></svg>
<div class="abs" style="left:34px;top:151px;width:925px;height:237px;border:1px solid #e1e3e8;border-top:none;background:#f9fafc"></div>
<div class="abs" style="left:40px;top:155.5px;width:913.5px;height:33px;border:1.2px solid #3d4fa8;background:#f9fafc"></div>
<div class="abs" style="left:35px;top:193px;width:923px;height:39.5px;background:#dae0f7"></div>
<div class="abs" style="left:53.5px;top:203px;font-size:16px;line-height:20px;font-weight:bold;color:#454545">Seleccionar</div>
<div class="abs" style="left:53.5px;top:242.8px;font-size:16.3px;line-height:20px;color:#161616">Disponible</div>
<div class="abs" style="left:53.5px;top:282.1px;font-size:16.3px;line-height:20px;color:#161616">Asignado</div>
<div class="abs" style="left:53.5px;top:321.4px;font-size:16.3px;line-height:20px;color:#161616">Mantenimiento</div>
<div class="abs" style="left:53.5px;top:360.7px;font-size:16.3px;line-height:20px;color:#161616">Inactivo</div>
<svg class="abs" style="left:249.60000000000002px;top:243.2px" width="86.9" height="17" viewBox="0 0 86.9 17"><path d="M0 8.5 L16 0.5 V16.5Z" fill="#e0200e"/><rect x="14" y="7.1" width="71.9" height="2.9" fill="#e0200e"/></svg>
<svg class="abs" style="left:250px;top:281.2px" width="87.0" height="17" viewBox="0 0 87.0 17"><path d="M0 8.5 L16 0.5 V16.5Z" fill="#e0200e"/><rect x="14" y="7.1" width="72.0" height="2.9" fill="#e0200e"/></svg>
<svg class="abs" style="left:249.60000000000002px;top:318.1px" width="86.9" height="17" viewBox="0 0 86.9 17"><path d="M0 8.5 L16 0.5 V16.5Z" fill="#e0200e"/><rect x="14" y="7.1" width="71.9" height="2.9" fill="#e0200e"/></svg>
<svg class="abs" style="left:251px;top:353.3px" width="87.0" height="17" viewBox="0 0 87.0 17"><path d="M0 8.5 L16 0.5 V16.5Z" fill="#e0200e"/><rect x="14" y="7.1" width="72.0" height="2.9" fill="#e0200e"/></svg>
<div class="abs" style="left:993.3px;top:71.5px;width:6px;height:310.0px;border-radius:3px;background:#c3c4c7"></div>
</div>

</body></html>
